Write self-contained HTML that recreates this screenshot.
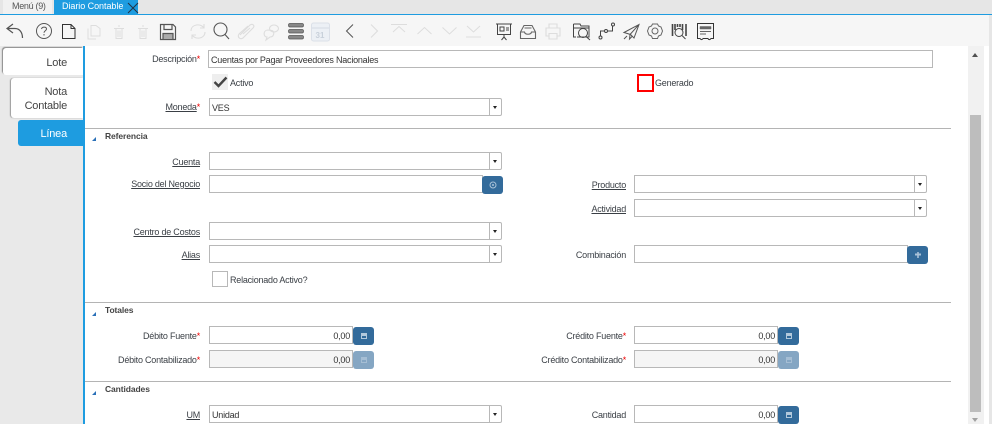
<!DOCTYPE html>
<html><head><meta charset="utf-8">
<style>
html,body{margin:0;padding:0;background:#fff}
#p{position:relative;width:992px;height:424px;overflow:hidden;background:#fff;font-family:"Liberation Sans",sans-serif;font-size:9px;letter-spacing:-.22px;color:#3a3f45}
#p div{position:absolute;box-sizing:border-box}
.t{white-space:nowrap;line-height:12px;height:12px}
.l{white-space:nowrap;line-height:12px;height:12px;text-align:right;width:180px}
.u{text-decoration:underline}
.r{color:#e00}
.i{border:1px solid #b8b8b8;background:#fff;height:18px;line-height:16px;padding:1px 0 0 2px;color:#333;white-space:nowrap}
.n{text-align:right;padding-right:2px}
.d{background:#f5f5f5}
.c{width:13px;height:18px;background:#fff;border:1px solid #b8b8b8;border-radius:0 2px 2px 0}
.c:after{content:"";position:absolute;left:3px;top:7px;border:2.5px solid transparent;border-top:3px solid #222;border-bottom:0}
.b{width:21px;height:18px;background:#336b9b;border-radius:3px}
.f{opacity:.6}
.h{height:1px;left:85px;width:866px;background:#b4b4b4}
.g{font-weight:bold;color:#444;font-size:8.5px;letter-spacing:-.1px}
.tri{width:0;height:0;border-style:solid;border-width:0 0 4px 4px;border-color:transparent transparent #2a70b8 transparent}
.k{width:16px;height:16px;background:#fff;border:1px solid #b8b8b8}
.tb{font-size:11px;line-height:14px;text-align:right;letter-spacing:-.2px}
</style></head><body><div id="p">

<div style="left:0;top:0;width:992px;height:14px;background:#e6e6e6"></div>
<div style="left:3px;top:0;width:49px;height:14px;background:#f1f1f1"></div>
<div class="t" style="left:12px;top:0;color:#555;letter-spacing:-.3px">Menú (9)</div>
<div style="left:54px;top:0;width:84px;height:14px;background:#1e9ce0"></div>
<div class="t" style="left:62px;top:0;color:#fff;letter-spacing:-.05px">Diario Contable</div>
<svg style="position:absolute;left:127px;top:2px" width="12" height="12"><path d="M1 1L11 11M11 1L1 11" stroke="#234" stroke-width="1" fill="none"/></svg>
<div style="left:0;top:14px;width:992px;height:1px;background:#1e9ce0"></div>
<div style="left:0;top:15px;width:992px;height:31px;background:#f6f6f6"></div>

<svg style="position:absolute;left:0;top:15px;filter:blur(.3px)" width="730" height="31" fill="none" stroke-width="1">
<g stroke="#555" stroke-width="1.2"><path d="M13 9L7 13.500L13 18M7 13.500H15C20 13.500 22.500 18 22.500 23"/></g>
<g stroke="#555"><circle cx="44" cy="16" r="7.500"/><path d="M41.500 14C42 11.500 46.500 11.500 46.500 14C46.500 15.800 44 15.800 44 17.800M44 19V20.500"/></g>
<g stroke="#333"><path d="M62.500 9.500H71L75 13.500V23.500H62.500ZM71 9.500V13.500H75"/></g>
<g stroke="#ddd"><path d="M91 10.500H96L100 13.500V21H91ZM88 13.500V24H96"/><path d="M114 13.500H124M116 13.500V23.500H122V13.500M118 11H120M118 15.500V22M120 15.500V22"/><path d="M138 13.500H148M140 13.500V23.500H146V13.500M142 11H144M142 15.500V22M144 15.500V22"/></g>
<g stroke="#555" stroke-width="1.200"><path d="M160.500 9.500H173L175.500 12V24.500H160.500Z"/><path d="M164 10V14.500H172V10"/><path d="M163 24V18.500H173V24" fill="#aaa"/></g>
<g stroke="#ddd" stroke-width="1.100"><path d="M191 16C191 9 201 8 204 13M205 17C205 24 195 25 192 20M204 9V13H200M192 24V20H196"/></g>
<g stroke="#555" stroke-width="1.100"><circle cx="220.500" cy="14.500" r="6.500"/><path d="M225 19.500L229 24"/></g>
<g stroke="#ddd" stroke-width="1.100"><path d="M240 20L250 10C253 8 255 11 253 13L243 23C240 25 237 22 239 19L248 11M243 19L250 13"/><path d="M268 15C263 15 263 22 267 22L266 25L270 22C274 22 275 17 272 15.500Z"/><ellipse cx="274" cy="13.500" rx="4.500" ry="3.500"/></g>
<g fill="#888" stroke="#555" stroke-width=".7"><rect x="288.500" y="8.500" width="15" height="3.500" rx="1.500"/><rect x="288.500" y="14.500" width="15" height="3.500" rx="1.500"/><rect x="288.500" y="20.500" width="15" height="3.500" rx="1.500"/></g>
<g><rect x="311.500" y="8" width="18" height="18" rx="2" fill="#ecf0f5" stroke="#dbe0e8"/><path d="M312 13H329" stroke="#d4dae3"/><text x="315.500" y="23" font-size="8" font-family="Liberation Sans" letter-spacing="0" font-weight="bold" fill="#c8d0da" stroke="none">31</text></g>
<path d="M353 9.500L346.500 16L353 22.500" stroke="#555"/>
<g stroke="#ddd"><path d="M371 9.500L377.500 16L371 22.500"/><path d="M391 9.500H407M393 17L399 11.500L405 17M417.500 19L424.500 12.500L431.500 19M442.500 12.500L449.500 19L456.500 12.500M467 11L473.500 17L480 11M466 22H481"/></g>
<g stroke="#444"><path d="M496 9H512M497.500 9V19.500H510.500V9"/><path d="M500 12H504V16H500ZM506 13H509M506 15H509M504 20V23M504 22L501.500 25M504 22L506.500 25"/></g>
<g stroke="#666" stroke-width="1.100"><path d="M520.500 17L524 10.500H532L535.500 17V23.500H520.500ZM520.500 17H524.500C525 20 531 20 531.500 17H535.500M524.500 13H531.500"/></g>
<g stroke="#ddd" stroke-width="1.100"><path d="M549 13V9H557V13M549 21H546V13H560V21H557M549 18.500H557V24H549Z"/></g>
<g stroke="#444"><path d="M573.500 9H580L581 11H589V22H577M573.500 9V22H576M574 13H589"/><circle cx="583" cy="18" r="4.500"/><path d="M586 21.500L590 25"/></g>
<g stroke="#444"><circle cx="600.500" cy="22.500" r="1.500"/><circle cx="606" cy="16" r="1.500"/><circle cx="613" cy="9.500" r="1.500"/><path d="M600.500 21V16H604.500M607.500 16H612.500V11"/></g>
<g stroke="#555"><path d="M624 17.500L639 9.500L634 23L630.500 19.500ZM639 9.500L630 19.500L629.500 24L632.500 21M624 24L627 21"/></g>
<g stroke="#666"><path d="M652.500 9H657.500L658.500 11L661 12L662.500 16L661 20L658.500 21L657.500 23.500H652.500L651.500 21L649 20L647.500 16L649 12L651.500 11Z"/><circle cx="655" cy="16" r="3"/></g>
<g stroke="#444"><path d="M672.500 9V21M675 9V15M677.500 9V12M680 9V12M682.500 9V15M686 9V21" stroke-width="1.600"/><circle cx="679" cy="17.500" r="4" fill="#f6f6f6"/><path d="M682 20.500L685.500 24"/></g>
<g stroke="#333"><path d="M697.500 8.500H713.500V23.500H711C710 25 708.500 25 708 23.500H703C702.500 25 701 25 700 23.500H697.500Z"/><path d="M700 11.500H711V14H700Z" fill="#666" stroke="#666" stroke-width=".5"/><path d="M700 16.500H711M700 19H706" stroke="#666"/></g>
</svg>

<div style="left:0;top:46px;width:83px;height:378px;background:#e9e9e9"></div>
<div style="left:83px;top:46px;width:2px;height:378px;background:#1e9ce0"></div>
<div style="left:3px;top:48px;width:80px;height:27px;background:#fff;border-radius:3px 0 0 3px;box-shadow:-1px -1px 1px #888"></div>
<div style="left:11px;top:78px;width:72px;height:40px;background:#fff;border-radius:3px 0 0 3px;box-shadow:-1px 0 1px #999"></div>
<div style="left:18px;top:120px;width:65px;height:26px;background:#1e9ce0;border-radius:3px 0 0 3px"></div>
<div class="tb" style="left:3px;top:56px;width:64px;color:#444">Lote</div>
<div class="tb" style="left:11px;top:85px;width:56px;color:#444">Nota<br>Contable</div>
<div class="tb" style="left:18px;top:127px;width:49px;color:#fff">Línea</div>

<div class="l" style="left:20px;top:53px">Descripción<span class="r">*</span></div>
<div class="i" style="left:208px;top:50px;width:725px">Cuentas por Pagar Proveedores Nacionales</div>
<div style="left:212px;top:74px;width:16px;height:16px;background:#eee"></div>
<svg style="position:absolute;left:213px;top:75px" width="15" height="14"><path d="M1.500 7L5.500 11L13.500 2.500" stroke="#444" stroke-width="2.400" fill="none"/></svg>
<div class="t" style="left:230px;top:77px">Activo</div>
<div style="left:637px;top:74px;width:17px;height:18px;border:2px solid #f00;background:#fff"></div>
<div class="t" style="left:655px;top:77px">Generado</div>
<div class="l" style="left:20px;top:101px"><span class="u">Moneda</span><span class="r">*</span></div>
<div class="i" style="left:209px;top:98px;width:281px">VES</div><div class="c" style="left:489px;top:98px"></div>

<div class="h" style="top:128px"></div>
<div class="tri" style="left:92px;top:137px"></div>
<div class="t g" style="left:105px;top:130px">Referencia</div>
<div class="l u" style="left:20px;top:156px">Cuenta</div>
<div class="i" style="left:209px;top:152px;width:281px"></div><div class="c" style="left:489px;top:152px"></div>
<div class="l u" style="left:20px;top:178px">Socio del Negocio</div>
<div class="i" style="left:209px;top:175px;width:274px"></div>
<div class="b" style="left:482px;top:176px"></div>
<svg style="position:absolute;left:489px;top:181px" width="8" height="8"><circle cx="4" cy="4" r="3" fill="none" stroke="#a9c2d8" stroke-width="1"/><circle cx="4" cy="4" r="1" fill="#a9c2d8"/></svg>
<div class="l u" style="left:20px;top:226px">Centro de Costos</div>
<div class="i" style="left:209px;top:222px;width:281px"></div><div class="c" style="left:489px;top:222px"></div>
<div class="l u" style="left:20px;top:249px">Alias</div>
<div class="i" style="left:209px;top:245px;width:281px"></div><div class="c" style="left:489px;top:245px"></div>
<div class="k" style="left:212px;top:271px"></div>
<div class="t" style="left:230px;top:274px">Relacionado Activo?</div>

<div class="l u" style="left:446px;top:179px">Producto</div>
<div class="i" style="left:634px;top:175px;width:281px"></div><div class="c" style="left:914px;top:175px"></div>
<div class="l u" style="left:446px;top:203px">Actividad</div>
<div class="i" style="left:634px;top:199px;width:281px"></div><div class="c" style="left:914px;top:199px"></div>
<div class="l" style="left:446px;top:249px">Combinación</div>
<div class="i" style="left:634px;top:245px;width:274px"></div>
<div class="b" style="left:907px;top:246px"></div>
<svg style="position:absolute;left:914px;top:251px" width="8" height="8"><path d="M3.200 1H4.800V7H3.200ZM1 2.500H7V4.500H1Z" fill="#a9c2d8"/></svg>

<div class="h" style="top:302px"></div>
<div class="tri" style="left:92px;top:312px"></div>
<div class="t g" style="left:105px;top:304px">Totales</div>
<div class="l" style="left:20px;top:330px">Débito Fuente<span class="r">*</span></div>
<div class="i n" style="left:209px;top:326px;width:144px">0,00</div>
<div class="b" style="left:353px;top:327px"></div>
<div class="l" style="left:20px;top:354px">Débito Contabilizado<span class="r">*</span></div>
<div class="i n d" style="left:209px;top:350px;width:144px">0,00</div>
<div class="b f" style="left:353px;top:351px"></div>
<div class="l" style="left:446px;top:330px">Crédito Fuente<span class="r">*</span></div>
<div class="i n" style="left:634px;top:326px;width:144px">0,00</div>
<div class="b" style="left:778px;top:327px"></div>
<div class="l" style="left:446px;top:354px">Crédito Contabilizado<span class="r">*</span></div>
<div class="i n d" style="left:634px;top:350px;width:144px">0,00</div>
<div class="b f" style="left:778px;top:351px"></div>

<div class="h" style="top:381px"></div>
<div class="tri" style="left:92px;top:391px"></div>
<div class="t g" style="left:105px;top:383px">Cantidades</div>
<div class="l u" style="left:20px;top:409px">UM</div>
<div class="i" style="left:209px;top:405px;width:281px">Unidad</div><div class="c" style="left:489px;top:405px"></div>
<div class="l" style="left:446px;top:409px">Cantidad</div>
<div class="i n" style="left:634px;top:405px;width:144px">0,00</div>
<div class="b" style="left:778px;top:406px"></div>

<svg style="position:absolute;left:0;top:0" width="992" height="424">
<g fill="#b3c9dc"><path fill-rule="evenodd" d="M361 333H367V339H361ZM362 336V338H366V336Z"/><path fill-rule="evenodd" d="M786 333H792V339H786ZM787 336V338H791V336Z"/><path fill-rule="evenodd" d="M786 412H792V418H786ZM787 415V417H791V415Z"/><g opacity=".7"><path fill-rule="evenodd" d="M361 357H367V363H361ZM362 360V362H366V360Z"/><path fill-rule="evenodd" d="M786 357H792V363H786ZM787 360V362H791V360Z"/></g></g>
</svg>

<div style="left:968px;top:46px;width:16px;height:378px;background:#f1f1f1"></div>
<div style="left:970px;top:115px;width:11px;height:297px;background:#bdbdbd"></div>
<div style="left:972px;top:53px;border:3.500px solid transparent;border-bottom:4px solid #505050;border-top:0"></div>
<div style="left:972px;top:418px;border:3.500px solid transparent;border-top:4px solid #a3a3a3;border-bottom:0"></div>
<div style="left:989px;top:15px;width:3px;height:409px;background:#e6e6e6"></div>
</div></body></html>
